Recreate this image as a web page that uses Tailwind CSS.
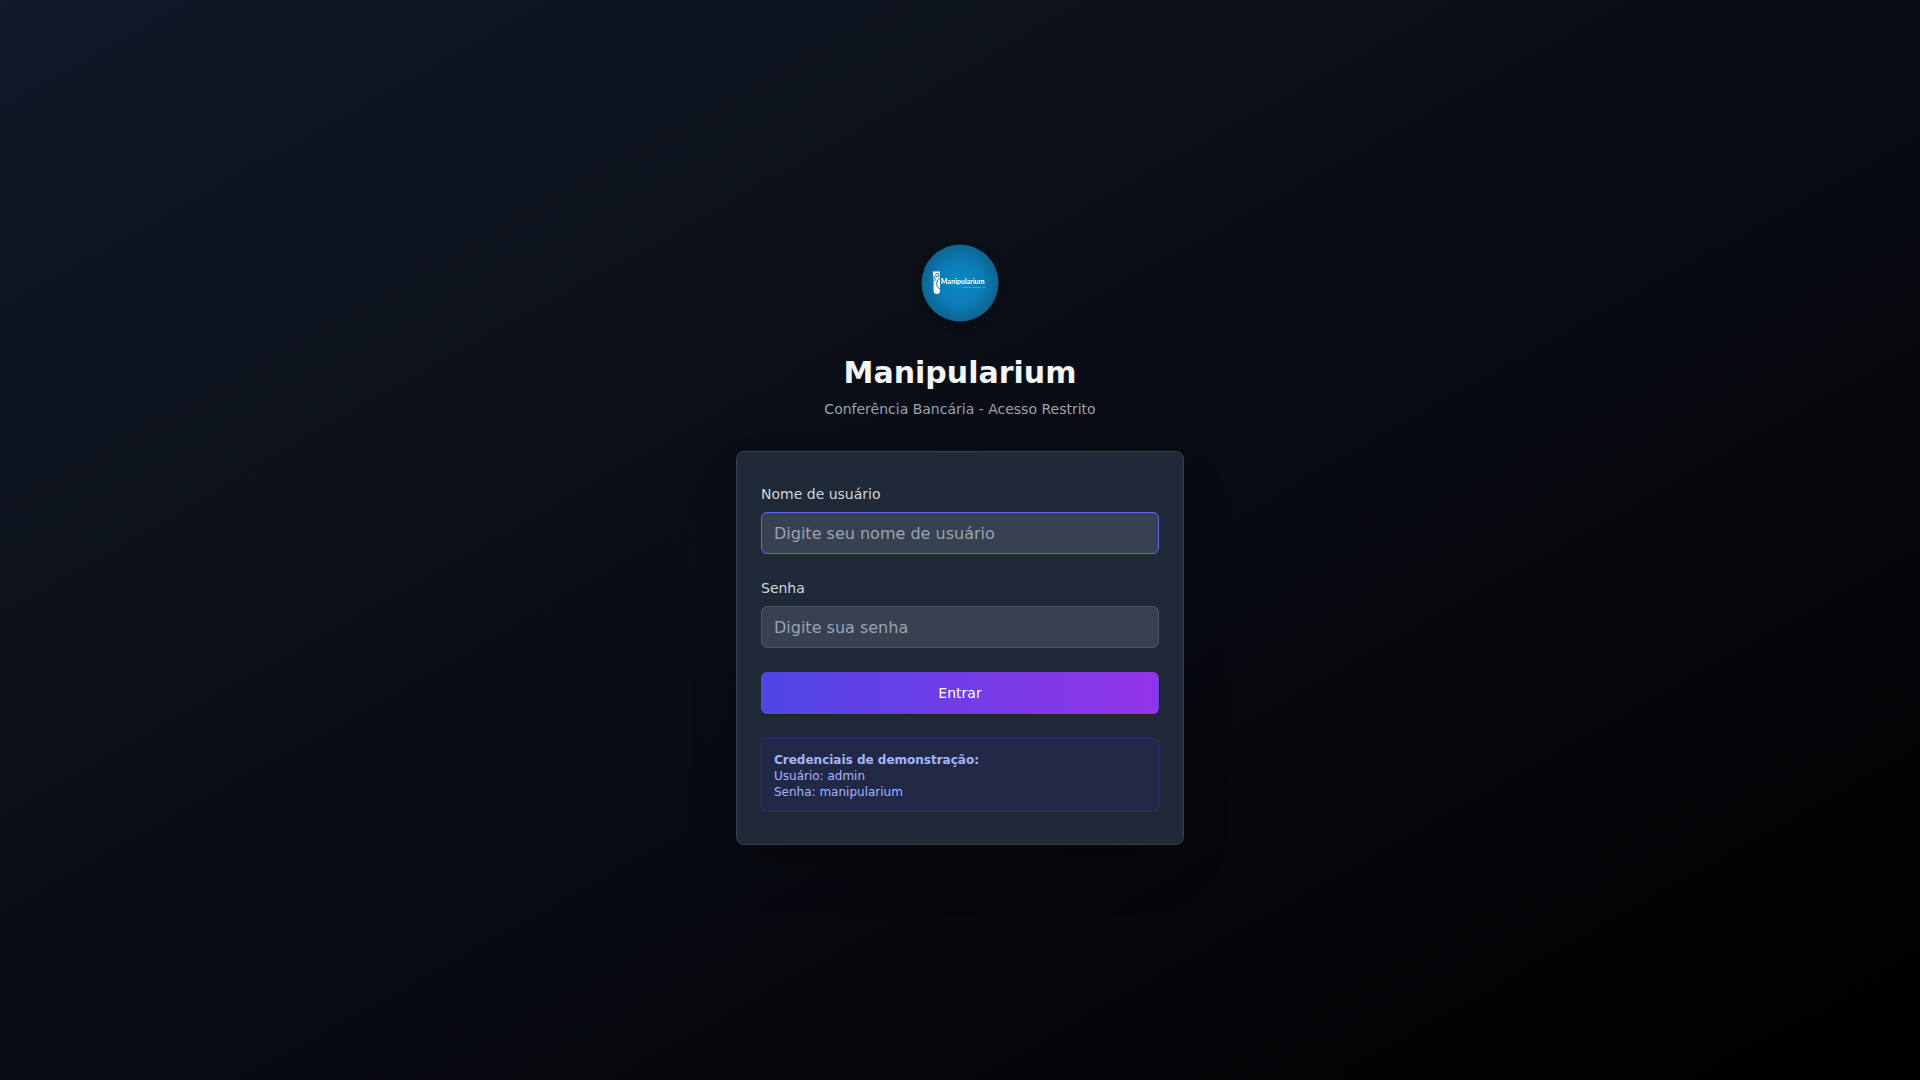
<!DOCTYPE html>
<html lang="pt-BR">
<head>
<meta charset="utf-8">
<title>Manipularium</title>
<script src="https://cdn.jsdelivr.net/npm/@tailwindcss/browser@4"></script>
</head>
<body class="font-['DejaVu_Sans',sans-serif]">
<main class="min-h-screen flex items-center justify-center p-4 bg-linear-to-br/srgb from-[#111827] to-black">
  <div class="w-full max-w-md">
    <header class="text-center mb-8">
      <svg class="mx-auto mb-6 size-24 drop-shadow-lg" viewBox="0 0 96 96" role="img" aria-label="Manipularium">
        <defs>
          <radialGradient id="disc"><stop offset="0" stop-color="#0b88c6"/><stop offset="0.6" stop-color="#0b7cb5"/><stop offset="1" stop-color="#0d6490"/></radialGradient>
        </defs>
        <circle cx="48" cy="48" r="38.5" fill="url(#disc)"/>
        <path d="M21 36.500h7v19q0 3.500-3.200 3.500t-3.200-3.500v-14.500h-.6z" fill="#fff"/>
        <g fill="none" stroke="#0b7cb5" stroke-width="1">
          <circle cx="25.300" cy="40" r="1.700"/>
          <path d="M28.500 42.500q-4 2-4 6t4 6M22.500 41.500q1.500 2 0 4.500"/>
        </g>
        <text x="29" y="49" font-family="Lato, sans-serif" font-size="7" font-weight="900" fill="#fff">Manipularium</text>
        <path d="M50 52.500h24" stroke="#7fc0e0" stroke-width="1" stroke-dasharray="9 1" opacity=".5"/>
      </svg>
      <h1 class="text-3xl font-bold text-[#f3f4f6] mb-2">Manipularium</h1>
      <p class="text-sm text-[#9ca3af]">Conferência Bancária - Acesso Restrito</p>
    </header>
    <form class="bg-[#1f2937] border border-[#374151] rounded-lg shadow-2xl px-6 py-8 flex flex-col gap-6">
      <div>
        <label for="username" class="block text-sm text-[#d1d5db] mb-2">Nome de usuário</label>
        <input id="username" type="text" placeholder="Digite seu nome de usuário" class="block w-full px-3 pt-[9px] pb-[7px] rounded-md bg-[#374151] border border-[#6366f1] text-white placeholder-[#9ca3af] outline-none">
      </div>
      <div>
        <label for="password" class="block text-sm text-[#d1d5db] mb-2">Senha</label>
        <input id="password" type="password" placeholder="Digite sua senha" class="block w-full px-3 pt-[9px] pb-[7px] rounded-md bg-[#374151] border border-[#4b5563] text-white placeholder-[#9ca3af] outline-none">
      </div>
      <button type="button" class="w-full h-[42px] rounded-md border border-transparent bg-linear-to-r/srgb from-[#4f46e5] to-[#9333ea] text-white text-sm shadow-sm">Entrar</button>
      <div class="px-3 pt-[13px] pb-[11px] border rounded-md bg-[#312e81]/20 border-[#312e81] text-xs text-[#a5b4fc]">
        <p class="font-bold">Credenciais de demonstração:</p>
        <p>Usuário: admin</p>
        <p>Senha: manipularium</p>
      </div>
    </form>
  </div>
</main>
</body>
</html>
